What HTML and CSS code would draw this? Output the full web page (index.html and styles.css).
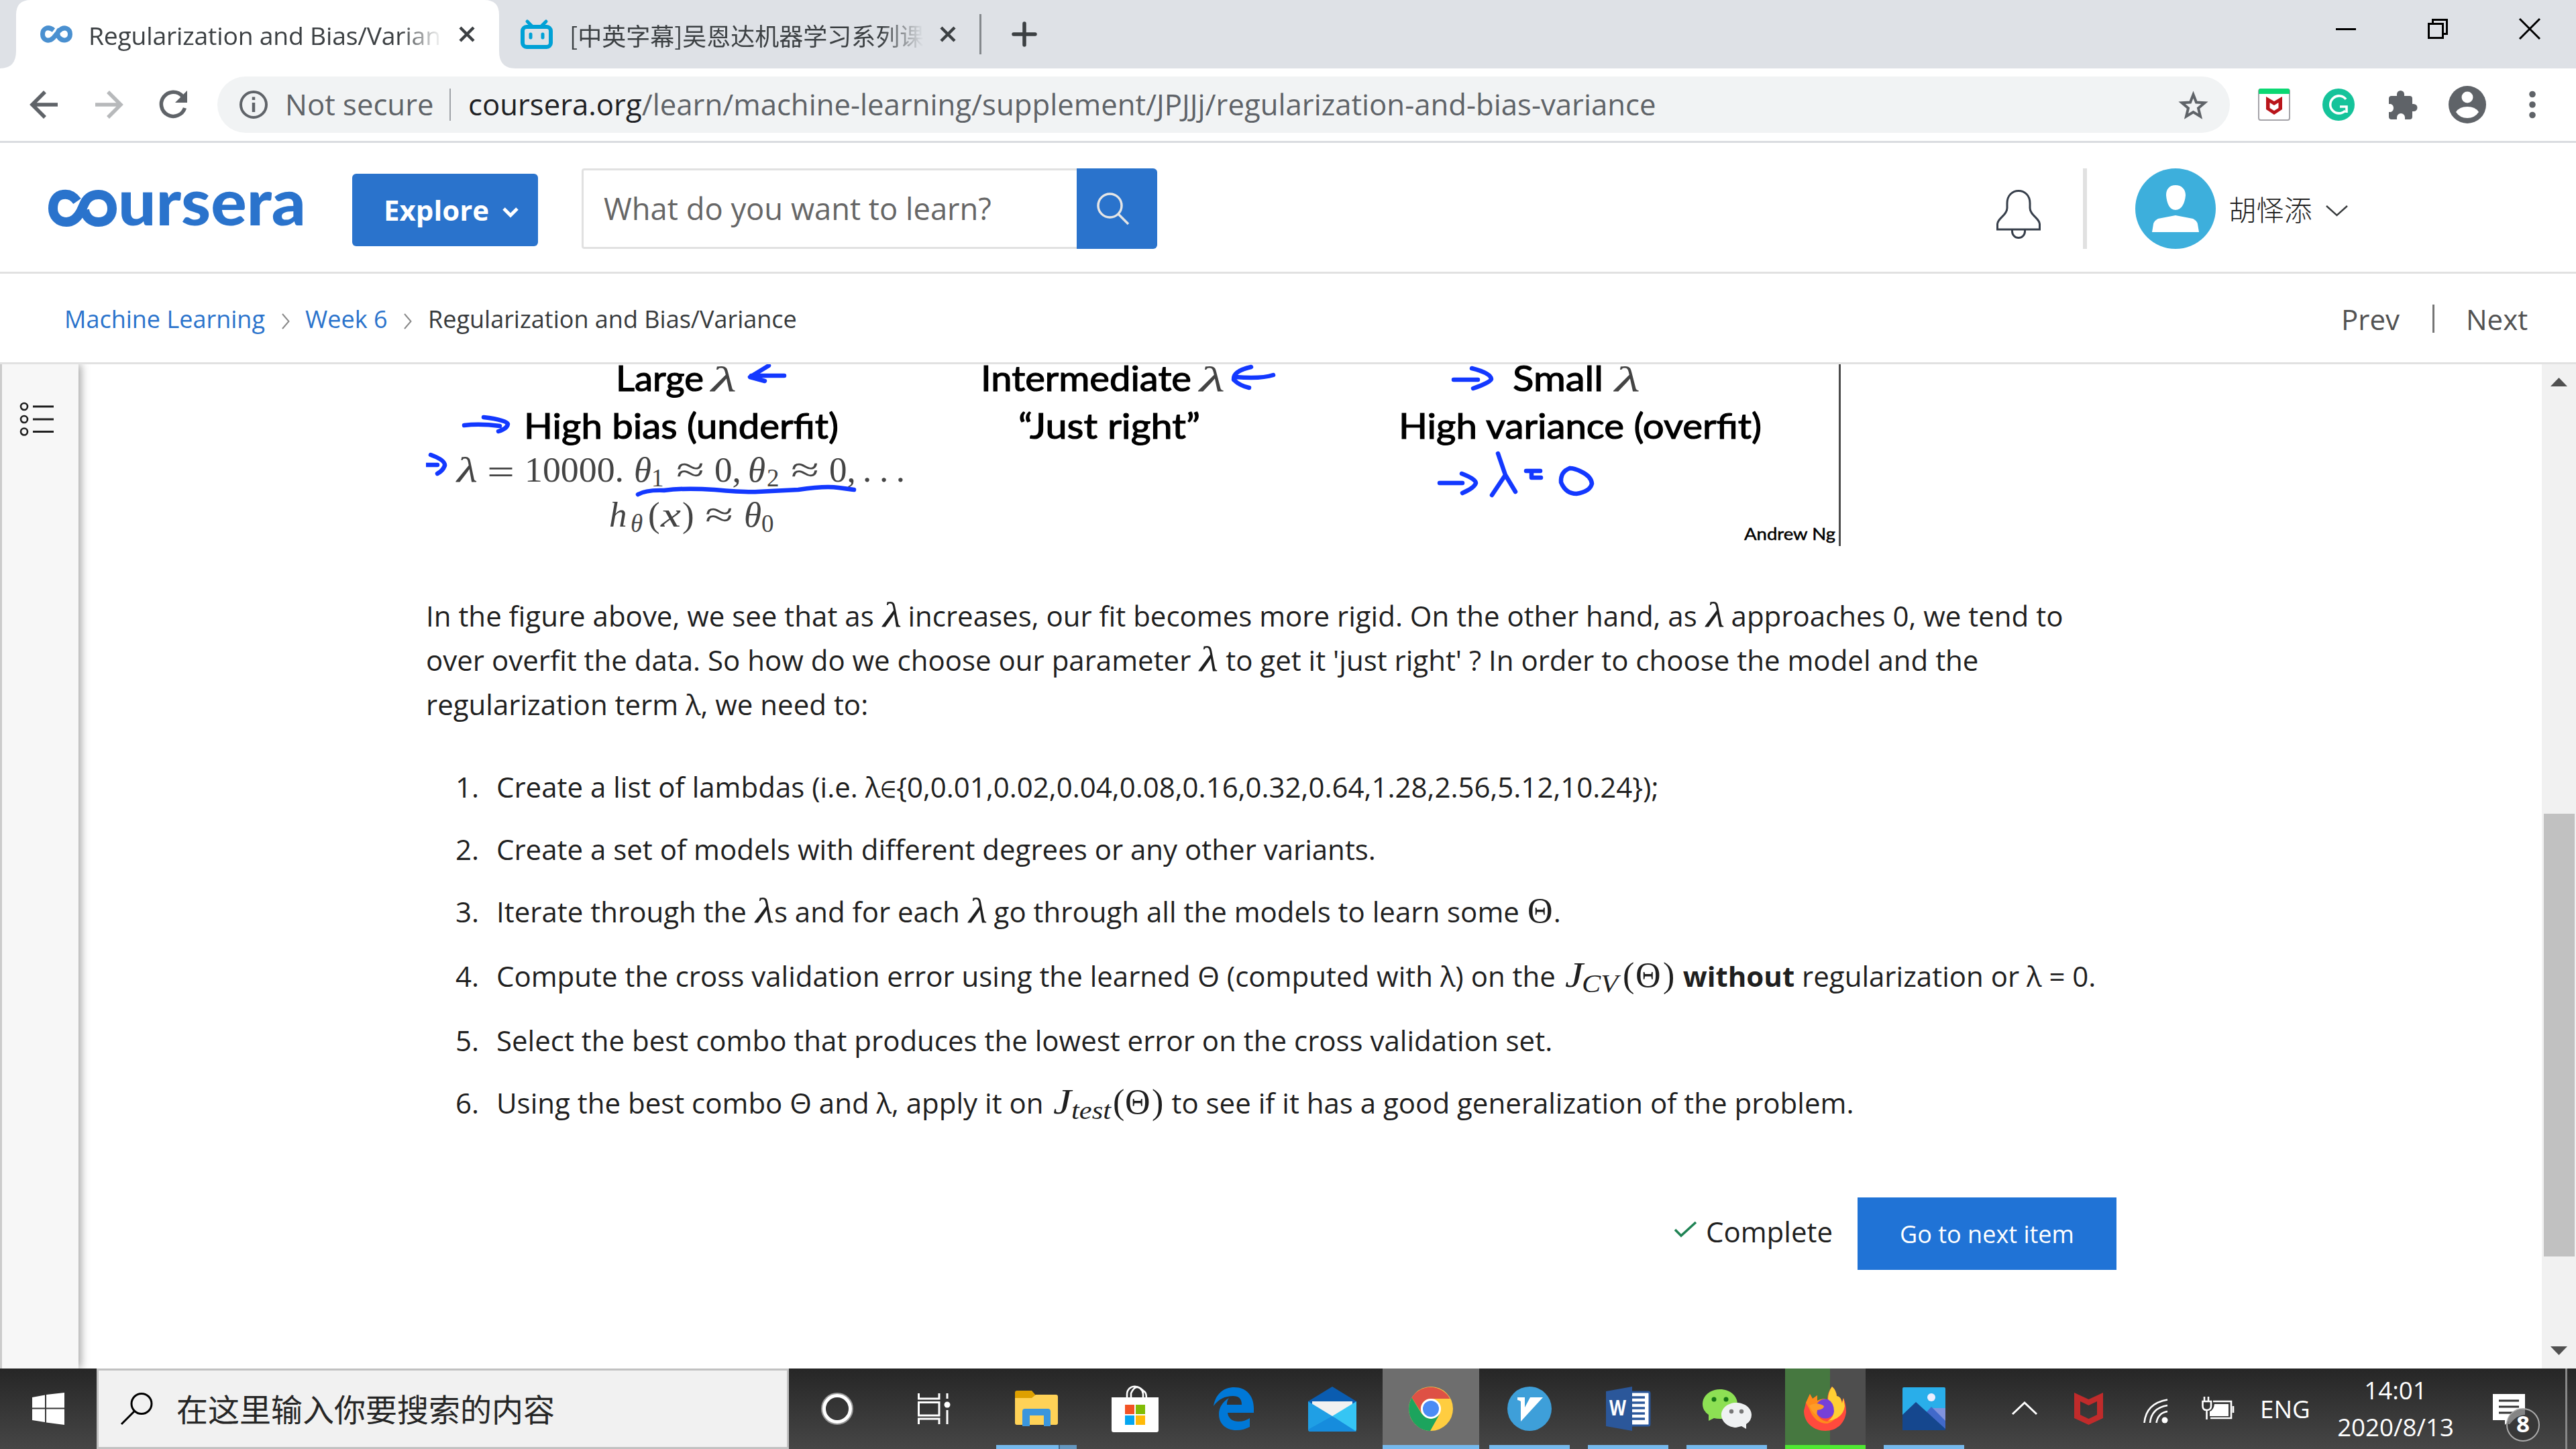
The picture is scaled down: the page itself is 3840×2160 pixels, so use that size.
FILE: index.html
```html
<!DOCTYPE html>
<html lang="en">
<head>
<meta charset="utf-8">
<title>Regularization and Bias/Variance | Coursera</title>
<link rel="stylesheet" href="styles.css">
</head>
<body>
<header class="tabs">
  <svg class="tab-shape" width="768" height="102" viewBox="0 0 768 102"><path d="M0 102Q24 102 24 76V22Q24 0 46 0H722Q744 0 744 22V76Q744 102 768 102Z" fill="#fff"/></svg>
  <div class="tab tab-active">
    <svg width="48" height="26" viewBox="0 0 48 26" fill="none" stroke="#4a90d0" stroke-width="7"><path d="M20 7C11 0 3.500 5 3.500 13S12 26 20 18L28 8C36 0 44.500 5 44.500 13S36 25 29 19C25 15 25 10 29 6"/></svg>
    <span class="tab-title t1">Regularization and Bias/Varian</span>
    <svg class="x" width="24" height="24" viewBox="0 0 24 24"><path d="M2 2L22 22M22 2L2 22"/></svg>
  </div>
  <div class="tab tab-second">
    <svg width="48" height="44" viewBox="0 0 48 44" fill="none" stroke="#00a1d6" stroke-linecap="round"><path d="M10 3L17 10M38 3L31 10" stroke-width="5"/><rect x="3" y="11" width="42" height="30" rx="6" stroke-width="6"/><path d="M15 22V27M33 22V27" stroke-width="5"/></svg>
    <span class="tab-title t2">[中英字幕]吴恩达机器学习系列课</span>
    <svg class="x" width="24" height="24" viewBox="0 0 24 24"><path d="M2 2L22 22M22 2L2 22"/></svg>
  </div>
  <i class="tab-divider"></i>
  <svg class="plus" width="36" height="36" viewBox="0 0 36 36"><path d="M18 2V34M2 18H34" stroke="#3c4043" stroke-width="5.500" stroke-linecap="round"/></svg>
  <div class="window-controls">
    <svg width="30" height="30" viewBox="0 0 30 30"><path d="M0 15.500H30"/></svg>
    <svg width="30" height="30" viewBox="0 0 30 30"><path d="M1.500 7.500H22.500V28.500H1.500ZM7.500 7V1.500H28.500V22.500H23"/></svg>
    <svg width="30" height="30" viewBox="0 0 30 30"><path d="M0 0L30 30M30 0L0 30"/></svg>
  </div>
</header>

<div class="toolbar">
  <svg class="back" width="42" height="42" viewBox="0 0 42 42"><path d="M41 21H4M22 2L3 21L22 40"/></svg>
  <svg class="forward" width="42" height="42" viewBox="0 0 42 42"><path d="M1 21H38M20 2L39 21L20 40"/></svg>
  <svg class="reload" width="42" height="42" viewBox="0 0 42 42"><path d="M35 8.500A18 18 0 1 0 38.500 26" fill="none" stroke="#5f6368" stroke-width="5.500"/><path d="M42 0V18H24Z" fill="#5f6368"/></svg>
  <div class="omnibox">
    <svg width="42" height="42" viewBox="0 0 42 42"><circle cx="21" cy="21" r="19" fill="none" stroke="#5f6368" stroke-width="4"/><path d="M21 18V32M21 9.500V14" stroke="#5f6368" stroke-width="4.500"/></svg>
    <span class="insecure">Not secure</span><i></i>
    <span class="url"><b>coursera.org</b>/learn/machine-learning/supplement/JPJJj/regularization-and-bias-variance</span>
    <svg class="star" width="45" height="43" viewBox="0 0 45 43"><path d="M22.500 6L27 17.500L39.500 18.300L30 26.300L33 38.500L22.500 32L12 38.500L15 26.300L5.500 18.300L18 17.500Z" fill="none" stroke="#5f6368" stroke-width="4"/></svg>
  </div>
  <svg class="ext-mcafee" width="48" height="48" viewBox="0 0 48 48"><rect x="1" y="1" width="46" height="46" rx="3" fill="#fff" stroke="#a4a3a8" stroke-width="2"/><path d="M1 8V3Q1 0 4 0H44Q47 0 47 3V8Z" fill="#0bd873"/><path d="M12 12L24 19L36 12V31L24 39L12 31Z" fill="#b9151b"/><path d="M17.500 21L24 25L30.500 21V29L24 33L17.500 29Z" fill="#fff"/></svg>
  <svg class="ext-g" width="48" height="48" viewBox="0 0 48 48"><circle cx="24" cy="24" r="24" fill="#15c39a"/><path d="M35 16A13 13 0 1 0 34 33M26 27H36V36" fill="none" stroke="#fff" stroke-width="3.600"/></svg>
  <svg class="ext-puzzle" width="43" height="43" viewBox="0 0 43 43"><path d="M4 8H12V5.500A5.500 5.500 0 0 1 23 5.500V8H31Q35 8 35 12V20H37A5.500 5.500 0 0 1 37 31H35V39Q35 43 31 43H24V40A6 6 0 0 0 12 40V43H4Q0 43 0 39V32H3A6.500 6.500 0 0 0 3 20H0V12Q0 8 4 8Z" fill="#5f6368"/></svg>
  <svg class="profile" width="56" height="56" viewBox="0 0 56 56"><circle cx="28" cy="28" r="28" fill="#5f6368"/><circle cx="28" cy="17" r="8.500" fill="#fff"/><path d="M11 39Q16 31 28 31T45 39Q39 48 28 48T11 39Z" fill="#fff"/></svg>
  <svg class="menu-dots" width="10" height="42" viewBox="0 0 10 42" fill="#5f6368"><circle cx="5" cy="5.500" r="4.800"/><circle cx="5" cy="21" r="4.800"/><circle cx="5" cy="36.500" r="4.800"/></svg>
</div>

<div class="site-header">
  <svg class="logo" width="382" height="56" viewBox="0 0 382 56" role="img" aria-label="coursera"><path d="M43 17C36 7 28 6 22 7C12 8 7 17 7 28C7 39 15 48 27 48C37 48 43 42 48 33L54 20C58 11 66 7 75 7C87 7 95 16 95 28S87 48 75 48C64 48 56 41 54 30" fill="none" stroke="#2a73cc" stroke-width="14"/><text class="logo-text" x="104" y="53" textLength="280" lengthAdjust="spacingAndGlyphs">ursera</text></svg>
  <button class="explore"><span>Explore</span><svg width="26" height="18" viewBox="0 0 26 18"><path d="M3 4L13 14L23 4" fill="none" stroke="#fff" stroke-width="5"/></svg></button>
  <div class="search"><span>What do you want to learn?</span></div>
  <div class="search-btn"><svg width="48" height="48" viewBox="0 0 48 48" fill="none" stroke="#e5e5e5" stroke-width="3.500"><circle cx="19.500" cy="19.500" r="17.500"/><path d="M32 32L47 47"/></svg></div>
  <svg class="bell" width="66" height="73" viewBox="0 0 66 73" fill="none" stroke="#373f4b" stroke-width="3"><path d="M1.500 59V51C2 42 16 38 16 27V20C16 8 24 1.500 33 1.500S50 8 50 20V27C50 38 64 42 64.500 51V59ZM23.500 60V62A9.500 9.500 0 0 0 42.500 62V60"/></svg>
  <i class="vline"></i>
  <svg class="avatar" width="120" height="120" viewBox="0 0 120 120"><circle cx="60" cy="60" r="60" fill="#3dafdc"/><path d="M60 25C69 25 75 31 75 40C74 52 69 62 60 62S47 52 46 40C46 31 51 25 60 25ZM60 70L86 75Q92 78 93 83L95 95H25L27 83Q28 78 34 75Z" fill="#fff"/></svg>
  <span class="user-name">胡怿添</span>
  <svg class="user-chev" width="33" height="17" viewBox="0 0 33 17"><path d="M1 1L16.500 15L32 1" fill="none" stroke="#373a3c" stroke-width="2.400"/></svg>
</div>

<nav class="crumbs">
  <a class="c1">Machine Learning</a>
  <svg width="12" height="24" viewBox="0 0 12 24"><path d="M1 1L10.500 12L1 23"/></svg>
  <a class="c2">Week 6</a>
  <svg width="12" height="24" viewBox="0 0 12 24"><path d="M1 1L10.500 12L1 23"/></svg>
  <span class="c3">Regularization and Bias/Variance</span>
  <span class="prev">Prev</span><i></i><span class="next">Next</span>
</nav>

<div class="viewport">
  <aside class="rail"><svg width="52" height="54" viewBox="0 0 52 54" fill="none" stroke="#1f1f1f"><g stroke-width="2.600"><circle cx="7" cy="8" r="5"/><circle cx="7" cy="27" r="5"/><circle cx="7" cy="45.500" r="5"/></g><path d="M20 8H51M20 27H51M20 45.500H51" stroke-width="2.800"/></svg></aside>
  <main class="content">
    <svg class="figure" width="2110" height="271" viewBox="635 543 2110 271">
      <g class="fig-label">
        <text x="918" y="583" textLength="131" lengthAdjust="spacingAndGlyphs">Large</text>
        <text x="1462" y="583" textLength="314" lengthAdjust="spacingAndGlyphs">Intermediate</text>
        <text x="2255" y="583" textLength="135" lengthAdjust="spacingAndGlyphs">Small</text>
        <text x="781" y="654" textLength="469" lengthAdjust="spacingAndGlyphs">High bias (underfit)</text>
        <text x="1518" y="654" textLength="271" lengthAdjust="spacingAndGlyphs">“Just right”</text>
        <text x="2085" y="654" textLength="541" lengthAdjust="spacingAndGlyphs">High variance (overfit)</text>
        <text class="credit" x="2600" y="805" textLength="136" lengthAdjust="spacingAndGlyphs">Andrew Ng</text>
      </g>
      <g class="fig-math">
        <g class="it"><text x="1060" y="583" textLength="38" lengthAdjust="spacingAndGlyphs">λ</text><text x="1788" y="583" textLength="38" lengthAdjust="spacingAndGlyphs">λ</text><text x="2407" y="583" textLength="38" lengthAdjust="spacingAndGlyphs">λ</text>
        <text x="681" y="718" textLength="31" lengthAdjust="spacingAndGlyphs">λ</text><text x="945" y="718">θ</text><text x="1115" y="718">θ</text><text x="908" y="785">h</text><text class="sub" x="940" y="793">θ</text><text x="985" y="785" textLength="30" lengthAdjust="spacingAndGlyphs">x</text><text x="1109" y="785">θ</text></g>
        <text x="726" y="721" textLength="41" lengthAdjust="spacingAndGlyphs">=</text>
        <text x="782" y="718" textLength="148" lengthAdjust="spacingAndGlyphs">10000.</text>
        <text class="sub" x="971" y="725">1</text><text x="1008" y="718" textLength="42" lengthAdjust="spacingAndGlyphs">≈</text><text x="1065" y="718">0,</text>
        <text class="sub" x="1143" y="725">2</text><text x="1179" y="718" textLength="42" lengthAdjust="spacingAndGlyphs">≈</text><text x="1236" y="718">0,</text><text x="1286" y="718" textLength="63" lengthAdjust="spacing">...</text>
        <text x="966" y="785">(</text><text x="1017" y="785">)</text><text x="1051" y="785" textLength="42" lengthAdjust="spacingAndGlyphs">≈</text><text class="sub" x="1135" y="793">0</text>
      </g>
      <g class="ink">
        <path d="M1169 560H1120M1146 545L1118 562L1140 568"/>
        <path d="M1898 559Q1880 565 1842 562M1865 547Q1838 553 1839 566Q1848 575 1862 578"/>
        <path d="M692 634Q715 631 745 635M721 622Q755 626 757 632Q756 639 743 643"/>
        <path d="M635 693H652M642 678Q664 686 663 694Q660 702 652 706"/>
        <path d="M2167 566H2203M2194 549Q2222 556 2223 565Q2222 570 2196 579"/>
        <path d="M2146 720H2180M2179 706Q2200 714 2200 720Q2198 727 2180 735"/>
        <path d="M2233 676L2244 708L2259 733M2244 708L2224 738"/>
        <path d="M2275 702H2296M2283 705V712H2297"/>
        <path d="M2340 698Q2326 703 2327 719Q2334 736 2350 736Q2370 733 2373 721Q2372 710 2357 703Q2347 698 2340 698"/>
        <path d="M951 737Q963 730 990 731Q1020 727 1065 730Q1110 734 1130 733L1190 730Q1230 724 1250 727L1273 730"/>
      </g>
      <path d="M2742.500 543V814" stroke="#4c4c4c" stroke-width="3"/>
    </svg>
    <p>
      <span class="l1">In the figure above, we see that as <svg class="math" width="29" height="1"><text x="2" y="1" textLength="28" lengthAdjust="spacingAndGlyphs">λ</text></svg> increases, our fit becomes more rigid. On the other hand, as <svg class="math" width="29" height="1"><text x="2" y="1" textLength="28" lengthAdjust="spacingAndGlyphs">λ</text></svg> approaches 0, we tend to</span><br>
      <span class="l2">over overfit the data. So how do we choose our parameter <svg class="math" width="30" height="1"><text x="2" y="1" textLength="28" lengthAdjust="spacingAndGlyphs">λ</text></svg> to get it 'just right' ? In order to choose the model and the</span><br>
      <span class="l3">regularization term λ, we need to:</span>
    </p>
    <ol>
      <li><b>1.</b><span>Create a list of lambdas (i.e. λ<svg class="math element" width="24" height="1"><text x="0" y="1" textLength="24" lengthAdjust="spacingAndGlyphs">∈</text></svg>{0,0.01,0.02,0.04,0.08,0.16,0.32,0.64,1.28,2.56,5.12,10.24});</span></li>
      <li><b>2.</b><span>Create a set of models with different degrees or any other variants.</span></li>
      <li class="h-tall"><b>3.</b><span>Iterate through the <svg class="math" width="30" height="1"><text x="2" y="1" textLength="28" lengthAdjust="spacingAndGlyphs">λ</text></svg>s and for each <svg class="math" width="29" height="1"><text x="2" y="1" textLength="28" lengthAdjust="spacingAndGlyphs">λ</text></svg> go through all the models to learn some <svg class="math up" width="40" height="1"><text x="1" y="1">Θ</text></svg>.</span></li>
      <li class="h-tall"><b>4.</b><span>Compute the cross validation error using the learned Θ (computed with λ) on the <svg class="math" width="168" height="1"><text x="3" y="1" textLength="27" lengthAdjust="spacingAndGlyphs">J</text><text class="sub" x="28" y="9" textLength="54" lengthAdjust="spacingAndGlyphs">CV</text><text class="up" x="89" y="1">(</text><text class="up" x="108" y="1">Θ</text><text class="up" x="149" y="1">)</text></svg> <strong>without</strong> regularization or λ = 0.</span></li>
      <li><b>5.</b><span>Select the best combo that produces the lowest error on the cross validation set.</span></li>
      <li><b>6.</b><span>Using the best combo Θ and λ, apply it on <svg class="math" width="169" height="1"><text x="3" y="1" textLength="27" lengthAdjust="spacingAndGlyphs">J</text><text class="sub" x="30" y="9" textLength="59" lengthAdjust="spacingAndGlyphs">test</text><text class="up" x="92" y="1">(</text><text class="up" x="110" y="1">Θ</text><text class="up" x="150" y="1">)</text></svg> to see if it has a good generalization of the problem.</span></li>
    </ol>
    <div class="actions">
      <svg width="34" height="26" viewBox="0 0 34 26"><path d="M1 14L10 23L32 3" fill="none" stroke="#1f8354" stroke-width="3.500"/></svg>
      <span class="complete">Complete</span>
      <button class="go">Go to next item</button>
    </div>
  </main>
  <div class="scrollbar"><svg width="25" height="13" viewBox="0 0 25 13"><path d="M0 13L12.500 0L25 13Z"/></svg><i></i><svg width="25" height="13" viewBox="0 0 25 13"><path d="M0 0L12.500 13L25 0Z"/></svg></div>
</div>

<footer class="taskbar">
  <div class="start"><svg width="48" height="48" viewBox="0 0 48 48"><path d="M0 7L19 3.500V22.500H0ZM21 3L48 0V22.500H21ZM0 24.500H19V44L0 41ZM21 24.500H48V48L21 44.500Z" fill="#fff"/></svg></div>
  <div class="win-search"><svg width="48" height="48" viewBox="0 0 48 48" fill="none" stroke="#000" stroke-width="3"><circle cx="31" cy="16.500" r="15"/><path d="M20.500 27.500L1 47"/></svg><span>在这里输入你要搜索的内容</span></div>
  <div class="sys"><svg width="48" height="48" viewBox="0 0 48 48" fill="none"><circle cx="24" cy="24" r="22.500" stroke="#999" stroke-width="3"/><circle cx="24" cy="24" r="19.500" stroke="#fff" stroke-width="5"/></svg></div>
  <div class="sys"><svg width="48" height="46" viewBox="0 0 48 46" fill="none" stroke="#fff" stroke-width="3"><path d="M1.500 0V8H32V0M1.500 13.500H32V33H1.500ZM1.500 46V38H32V46M44 0V8M44 25V46"/><circle cx="44" cy="17" r="4.500" fill="#fff" stroke="none"/></svg></div>
  <div class="apps">
    <div class="app running stacked"><svg width="64" height="54" viewBox="0 0 64 54"><path d="M0 3Q0 0 3 0H25L31 7V20H0Z" fill="#dea000"/><path d="M0 11H25L31 6H61Q64 6 64 9V48Q64 51 61 51H3Q0 51 0 48Z" fill="#ffd257"/><path d="M11 53V31Q11 27 15 27H49Q53 27 53 31V53H43V37H22V53Z" fill="#3b96dd"/></svg></div>
    <div class="app"><svg width="70" height="70" viewBox="0 0 70 70"><path d="M23 19V13C24 -2 45 -2 47 13V19M29 19V12Q36 -4 47 8Q52 10 52 19" fill="none" stroke="#fff" stroke-width="2.600"/><path d="M0 18H70V67Q70 70 67 70H3Q0 70 0 67Z" fill="#fff"/><path d="M20 29H34V43H20Z" fill="#f35325"/><path d="M36 29H50V43H36Z" fill="#81bc06"/><path d="M20 45H34V59H20Z" fill="#05a6f0"/><path d="M36 45H50V59H36Z" fill="#ffba08"/></svg></div>
    <div class="app"><svg width="60" height="64" viewBox="0 0 60 64"><path d="M0 28C3 10 15 0 31 0C49 0 60 13 60 31V38H21C22 47 29 51 37 51C44 51 49 49 54 46V59C48 62 42 64 34 64C18 64 8 54 8 40C8 30 14 21 23 16C20 20 20 23 20 26H42C42 17 38 13 29 13C17 13 7 18 0 28Z" fill="#0078d7"/></svg></div>
    <div class="app"><svg width="72" height="67" viewBox="0 0 72 67"><path d="M0 22L36 0L72 22V30H0Z" fill="#0a5cb0"/><path d="M6 22H66V30L36 48L6 30Z" fill="#f1f1f1"/><path d="M0 22L36 44L72 67H3Q0 67 0 64Z" fill="#1f9fe5"/><path d="M72 22L36 44L70 67Q72 66 72 64Z" fill="#35c5f4"/><path d="M0 64L36 44L72 67H3Z" fill="#168cdd"/></svg></div>
    <div class="app running current"><svg width="66" height="66" viewBox="0 0 66 66"><circle cx="33" cy="33" r="33" fill="#ffcd40"/><path d="M4.500 16.500A33 33 0 0 1 61.500 18H33A15 15 0 0 0 19 39Z" fill="#de5145"/><path d="M4.500 16.500A33 33 0 0 0 32 66L46 41Q33 55 19 40Z" fill="#1ca45d"/><circle cx="33" cy="33" r="15" fill="#fff"/><circle cx="33" cy="33" r="12" fill="#4b8bf4"/></svg></div>
    <div class="app running"><svg width="66" height="66" viewBox="0 0 66 66"><circle cx="33" cy="33" r="33" fill="#3e9fd9"/><path d="M15 16H26V31L34 16H53L20 52V22Q17 20 15 20Z" fill="#fff"/></svg></div>
    <div class="app running"><svg width="66" height="66" viewBox="0 0 66 66"><rect x="30" y="8" width="35" height="50" rx="2" fill="#fff" stroke="#2b579a" stroke-width="3"/><path d="M36 16H58M36 24H58M36 32H58M36 40H58M36 48H58" stroke="#2b579a" stroke-width="3.500"/><path d="M0 7L39 0V66L0 59Z" fill="#2b579a"/><text class="word-w" x="5" y="43" textLength="25" lengthAdjust="spacingAndGlyphs">W</text></svg></div>
    <div class="app running"><svg width="73" height="59" viewBox="0 0 73 59"><path d="M26 0C11 0 0 10 0 22Q0 32 9 38V47L17 43Q21 44 26 44C41 44 52 34 52 22S41 0 26 0Z" fill="#8de054"/><circle cx="17" cy="15" r="3.500" fill="#167516"/><circle cx="35" cy="15" r="3.500" fill="#167516"/><path d="M50 20C38 20 28 28 28 38S38 57 50 57L58 55L65 59V52Q73 47 73 38C73 28 63 20 50 20Z" fill="#eff1f2"/><circle cx="43" cy="33" r="3.200" fill="#777"/><circle cx="58" cy="33" r="3.200" fill="#777"/></svg></div>
    <div class="app running loading"><svg width="64" height="66" viewBox="0 0 64 66"><path d="M3 24L9 11L13 18L20 13V21Q29 16 35 20Q35 8 42 0Q48 5 49 14Q55 15 57 23L59 17Q63 26 63 38C61 55 49 66 32 66S0 54 0 36Z" fill="#ff4a3d"/><path d="M3 24L9 11L13 18L20 13V21Q29 16 35 20L30 28Q21 32 18 36Q22 50 34 52Q48 50 51 36Q49 51 35 55Q16 55 8 33Z" fill="#ff8b1b"/><circle cx="32" cy="33" r="14.500" fill="#7640d8"/><path d="M8 28Q20 22 30 29Q30 34 20 35L19 43Q11 37 8 28Z" fill="#ff9c27"/><path d="M42 0Q36 8 36 19Q45 24 45 37Q44 46 36 51Q58 48 61 29L59 17L57 25Q55 14 49 14Q48 5 42 0Z" fill="#ffcf33"/></svg></div>
    <div class="app running"><svg width="64" height="64" viewBox="0 0 64 64"><rect width="64" height="64" rx="2" fill="#29aeea"/><path d="M42 64V31H64V64Z" fill="#8093dd"/><circle cx="43" cy="15" r="6" fill="#eef"/><path d="M35 38L43 29L64 50V64H35Z" fill="#4169ca"/><path d="M0 41L20 22L64 62V64H0Z" fill="#15478e"/></svg></div>
  </div>
  <div class="tray">
    <svg class="up-chev" width="38" height="20" viewBox="0 0 38 20"><path d="M1 19L19 2L37 19" fill="none" stroke="#fff" stroke-width="3"/></svg>
    <svg class="tray-m" width="43" height="48" viewBox="0 0 43 48"><path d="M0 0L21.500 10L43 0V38L21.500 48L0 38ZM9 13V33L21.500 39L34 33V13L21.500 19Z" fill="#c02b2b" fill-rule="evenodd"/></svg>
    <svg class="wifi" width="37" height="37" viewBox="0 0 37 37" fill="none" stroke="#fff" stroke-width="2.600"><path d="M1.500 36Q4 7 36 1.500M10 36Q12 14 36 10M19.500 36Q22 21 36 19"/><circle cx="32" cy="32" r="4.500" fill="#fff" stroke="none"/></svg>
    <svg class="battery" width="48" height="34" viewBox="0 0 48 34" fill="none" stroke="#fff" stroke-width="2.600"><path d="M17 7H44V32H13M47 14V24M4 0V6M10 0V6M1.500 7H14V14Q14 20 7.500 20Q1.500 20 1.500 14ZM7.500 20V34"/><path d="M19 11H40V29H12V22Q18 20 19 11Z" fill="#fff" stroke="none"/></svg>
    <span class="lang">ENG</span>
    <div class="clock"><span class="time">14:01</span><span class="date">2020/8/13</span></div>
    <svg class="action" width="72" height="74" viewBox="0 0 72 74"><path d="M0 0H48V39H25L18 46V39H0Z" fill="#fff"/><path d="M9 10H39M9 19H39M9 28H30" stroke="#333" stroke-width="3"/><circle cx="45" cy="46" r="24" fill="#383838" stroke="#aaa" stroke-width="2"/><path d="M23 45V37Q30 22 48 23V31Q36 31 25 45Z" fill="#858585"/><text class="badge" x="35" y="57" textLength="20" lengthAdjust="spacingAndGlyphs">8</text></svg>
    <i class="peek"></i>
  </div>
</footer>
</body>
</html>
```
FILE: styles.css
```css
* { box-sizing: border-box; }
body { margin: 0; width: 3840px; height: 2160px; overflow: hidden; display: flex; flex-direction: column; background: #fff; color: #1f1f1f; font-family: "Open Sans", "Noto Sans CJK SC", sans-serif; white-space: nowrap; }
svg { display: block; flex: none; overflow: visible; }
button { font: inherit; border: 0; padding: 0; }

.tabs { position: relative; height: 102px; flex: none; background: #dee1e6; display: flex; align-items: center; }
.tab-shape { position: absolute; left: 0; top: 0; }
.tab { position: relative; display: flex; align-items: center; height: 102px; flex: none; }
.tab-active { padding-left: 60px; width: 776px; }
.tab-second { width: 684px; }
.tab-title { overflow: hidden; font-size: 36px; line-height: 60px; color: #3c4043; -webkit-mask-image: linear-gradient(90deg, #000 88%, transparent); mask-image: linear-gradient(90deg, #000 88%, transparent); }
.t1 { width: 528px; margin: 3px 24px 0 24px; font-size: 37.3px; letter-spacing: -.2px; }
.t2 { width: 528px; margin: 1px 24px 0 25px; font-family: "Noto Sans CJK SC", sans-serif; }
.x path { stroke: #3c4043; stroke-width: 4.5; }
.tab-divider { width: 3px; height: 60px; background: #84888c; margin-right: 46px; }
.window-controls { margin-left: auto; padding-right: 54px; display: flex; gap: 107px; margin-top: -16px; }
.window-controls path { fill: none; stroke: #000; stroke-width: 3; }

.toolbar { height: 111px; flex: none; border-bottom: 3px solid #dadce0; display: flex; align-items: center; padding-left: 45px; }
.back path, .forward path { fill: none; stroke: #5f6368; stroke-width: 5.5; }
.forward { margin-left: 54px; opacity: .45; }
.reload { margin-left: 54px; }
.omnibox { width: 3000px; height: 84px; border-radius: 42px; background: #f1f3f4; margin-left: 45px; padding-left: 33px; display: flex; align-items: center; flex: none; font-size: 43.7px; color: #5f6368; }
.omnibox i { width: 2px; height: 48px; background: #9fa2a6; margin-right: 26px; }
.omnibox span { margin-top: -3px; flex: none; }
.insecure { width: 271px; padding-left: 26px; }
.url { width: 1820px; }
.url b { font-weight: 400; color: #202124; }
.star { margin-left: 729px; }
.ext-mcafee { margin-left: 42px; }
.ext-g { margin-left: 48px; }
.ext-puzzle { margin-left: 51px; }
.profile { margin-left: 46px; }
.menu-dots { margin-left: 64px; }

.site-header { height: 195px; flex: none; border-bottom: 3px solid #e1e1e1; display: flex; align-items: center; padding: 4px 0 0 72px; }
.logo { width: 382px; }
.logo-text { font: 900 96px "Lato", sans-serif; fill: #2a73cc; }
.explore { width: 277px; height: 108px; border-radius: 6px; background: #2a73cc; color: #fff; font-size: 42px; font-weight: 700; display: flex; align-items: center; margin: 3px 0 0 71px; padding-left: 47px; }
.explore span { width: 176px; text-align: left; }
.explore svg { margin-top: 7px; }
.search { margin-left: 65px; width: 738px; height: 120px; border: 3px solid #e1e1e1; border-right: 0; border-radius: 4px 0 0 4px; padding-left: 30px; font-size: 45.3px; line-height: 114px; color: #666; }
.search-btn { width: 120px; height: 120px; background: #2a73cc; border-radius: 0 6px 6px 0; padding: 36px 30px; }
.bell { margin: 16px 0 0 1251px; }
.vline { width: 6px; height: 120px; background: #e1e1e1; margin-left: 63px; }
.avatar { margin-left: 72px; }
.user-name { font: 300 41.5px "Noto Sans CJK SC", sans-serif; margin-left: 19px; width: 145px; color: #1f1f1f; }
.user-chev { margin-top: 6px; }

.crumbs { height: 135px; flex: none; border-bottom: 3px solid #e1e1e1; display: flex; align-items: center; font-size: 36px; padding: 2px 0 0 96px; }
.crumbs a { color: #2a73cc; }
.crumbs path { fill: none; stroke: #888; stroke-width: 2; }
.crumbs svg { margin-top: 8px; }
.c1 { width: 324px; } .c2 { width: 147px; margin-left: 23px; } .c3 { width: 2852px; margin-left: 24px; color: #373a3c; }
.prev, .next { font-size: 42px; color: #525252; }
.prev { width: 136px; }
.crumbs i { width: 3px; height: 42px; background: #757575; margin-right: 47px; }

.viewport { height: 1497px; flex: none; display: flex; }
.rail { width: 117px; flex: none; background: #f7f7f7; border-left: 3px solid #ccc; box-shadow: 4px 0 12px rgba(0,0,0,.35); padding: 55px 0 0 26px; clip-path: inset(0 -20px 0 0); }
.content { width: 3672px; flex: none; padding-left: 518px; }
.figure { overflow: hidden; }
.fig-label text { font: 400 53px "Lato", sans-serif; fill: #000; stroke: #000; stroke-width: 1.2; }
.fig-label .credit { font-size: 25.500px; stroke-width: .5; }
.fig-math text { font-family: "Liberation Serif", serif; font-size: 53px; fill: #444; }
.fig-math .it text { font-style: italic; }
.fig-math .sub, .fig-math .it .sub { font-size: 37px; }
.ink path { fill: none; stroke: #1338ff; stroke-width: 6.500; stroke-linecap: round; stroke-linejoin: round; }
p { margin: 71px 0 0; font-size: 42px; line-height: 66px; height: 198px; }
.math { display: inline-block; vertical-align: baseline; }
.math text { font: italic 52px "Liberation Serif", serif; fill: #1f1f1f; }
.math .up, .math.up text { font-style: normal; }
.math .sub { font-size: 37px; }
.element text { font: 35px "DejaVu Sans", sans-serif; }
ol { list-style: none; margin: 57px 0 0; padding: 0 0 0 44px; font-size: 42px; line-height: 66px; }
li { height: 93px; display: flex; }
li b { font-weight: 400; width: 61px; }
.h-tall { height: 96px; }
.actions { display: flex; align-items: center; margin-top: 81px; padding-left: 1861px; height: 108px; }
.actions svg { margin-top: -14px; }
.complete { font-size: 42px; width: 224px; margin: -8px 0 0 13px; }
.actions .complete + .go { margin-left: 2px; }
.go { width: 386px; height: 108px; background: #2073d6; color: #fff; font-size: 36px; }
.scrollbar { width: 51px; background: #f1f1f1; display: flex; flex-direction: column; align-items: center; padding: 20px 0; }
.scrollbar path { fill: #505050; }
.scrollbar i { width: 46px; height: 660px; background: #c1c1c1; margin: 637px 0 134px; }

.taskbar { height: 120px; flex: none; display: flex; align-items: center; background: linear-gradient(#262626, #464646); }
.start { width: 144px; padding-left: 48px; }
.win-search { width: 1032px; height: 120px; border: 3px solid #c1c1c1; background: #f1f1f1; display: flex; align-items: center; padding-left: 33px; font: 47px "Noto Sans CJK SC", sans-serif; color: #262626; }
.win-search span { margin: -3px 0 0 35px; }
.sys { width: 144px; display: flex; justify-content: center; }
.apps { display: flex; gap: 3px; margin-left: 9px; }
.app { width: 144px; height: 120px; display: flex; align-items: center; justify-content: center; background: no-repeat center bottom / 120px 6px; }
.running { background-image: linear-gradient(#76b9ed, #76b9ed); }
.stacked { background-image: linear-gradient(90deg, #76b9ed 93px, #41688a 93px 95px, #6497c0 95px); }
.current { background-color: #6e6e6e; background-size: 144px 6px; }
.loading { background-image: linear-gradient(#4fe832, #4fe832), linear-gradient(90deg, #467840 67px, #4e4e4e 67px); background-size: 120px 6px, 120px 120px; }
.word-w { font: 700 33px "Open Sans", sans-serif; fill: #fff; }
.tray { display: flex; align-items: center; height: 120px; margin-left: 59px; color: #fff; font-size: 36.7px; }
.up-chev { margin-top: -2px; }
.tray-m { margin-left: 55px; }
.wifi { margin: 6px 0 0 60px; }
.battery { margin: -3px 0 0 50px; }
.lang { width: 115px; margin-left: 39px; }
.clock { width: 174px; display: flex; flex-direction: column; align-items: center; line-height: 55px; }
.action { margin: 29px 0 0 58px; }
.badge { font: 700 34px "Open Sans", sans-serif; fill: #fff; }
.peek { width: 3px; height: 120px; background: #888; margin-left: 36px; }
```
